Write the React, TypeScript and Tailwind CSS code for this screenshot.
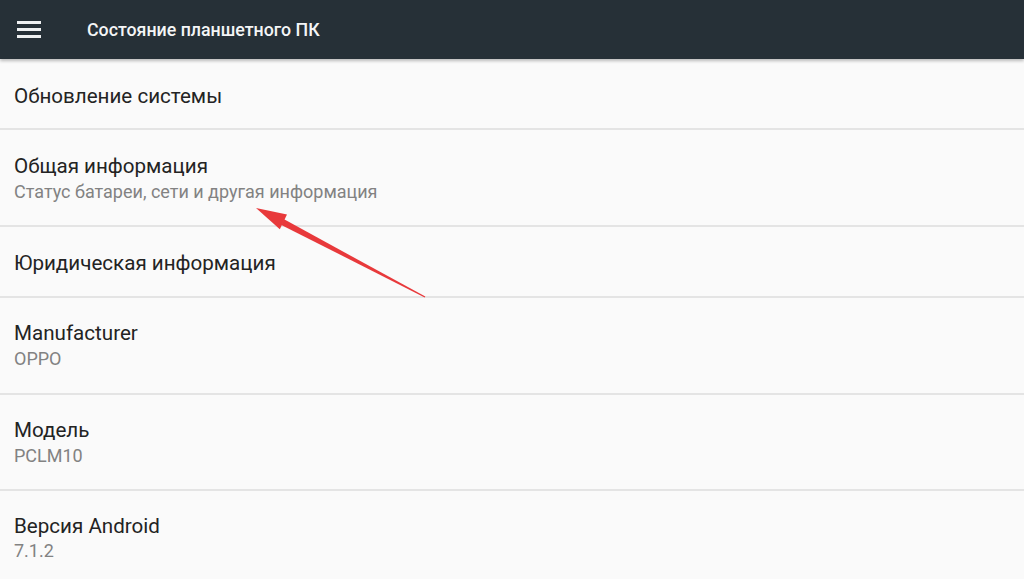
import React from 'react';

type Row = {
  title: string;
  sub?: string;
  h: string;
  pt: string;
  gap?: string;
};

const rows: Row[] = [
  { title: 'Обновление системы', h: 'h-[71px]', pt: 'pt-[24px]' },
  { title: 'Общая информация', sub: 'Статус батареи, сети и другая информация', h: 'h-[97px]', pt: 'pt-[23px]', gap: 'mt-[1px]' },
  { title: 'Юридическая информация', h: 'h-[71px]', pt: 'pt-[23px]' },
  { title: 'Manufacturer', sub: 'OPPO', h: 'h-[97px]', pt: 'pt-[22px]', gap: 'mt-[1px]' },
  { title: 'Модель', sub: 'PCLM10', h: 'h-[96px]', pt: 'pt-[22px]', gap: 'mt-[1px]' },
  { title: 'Версия Android', sub: '7.1.2', h: 'h-[96px]', pt: 'pt-[22px]', gap: 'mt-0' },
];

function Arrow() {
  return (
    <svg className="absolute inset-0 pointer-events-none" width="1024" height="579" viewBox="0 0 1024 579">
      <polygon points="425.3,296.6 424.7,297.4 281.3,224.9 284.1,219.3" fill="#e8393b" />
      <polygon points="256,208 287,214.6 279.8,229.2" fill="#e8393b" />
    </svg>
  );
}

export default function App() {
  return (
    <div className="relative w-[1024px] h-[579px] overflow-hidden bg-[#fafafa]" style={{ fontFamily: 'Roboto, "Noto Sans", sans-serif' }}>
      <header className="relative z-10 h-[59px] bg-[#263037] flex items-center shadow-[0_2px_3px_rgba(0,0,0,0.25)]">
        <div className="w-[87px] flex pl-[17px]">
          <div className="flex flex-col gap-[4px] w-[24px]">
            <span className="block h-[3px] bg-[#eef0f1]" />
            <span className="block h-[3px] bg-[#eef0f1]" />
            <span className="block h-[3px] bg-[#eef0f1]" />
          </div>
        </div>
        <h1 className="text-[17.8px] font-medium text-[#f4f5f6] leading-none">Состояние планшетного ПК</h1>
      </header>
      <div className="flex flex-col">
        {rows.map((r) => (
          <div key={r.title} className={`${r.h} ${r.pt} px-[14px] border-b-2 border-[#e4e4e4] shrink-0`}>
            <div className="text-[20.6px] leading-[26px] text-[#232323]">{r.title}</div>
            {r.sub && <div className={`${r.gap} text-[18px] leading-[24px] text-[#828282]`}>{r.sub}</div>}
          </div>
        ))}
      </div>
      <Arrow />
    </div>
  );
}
